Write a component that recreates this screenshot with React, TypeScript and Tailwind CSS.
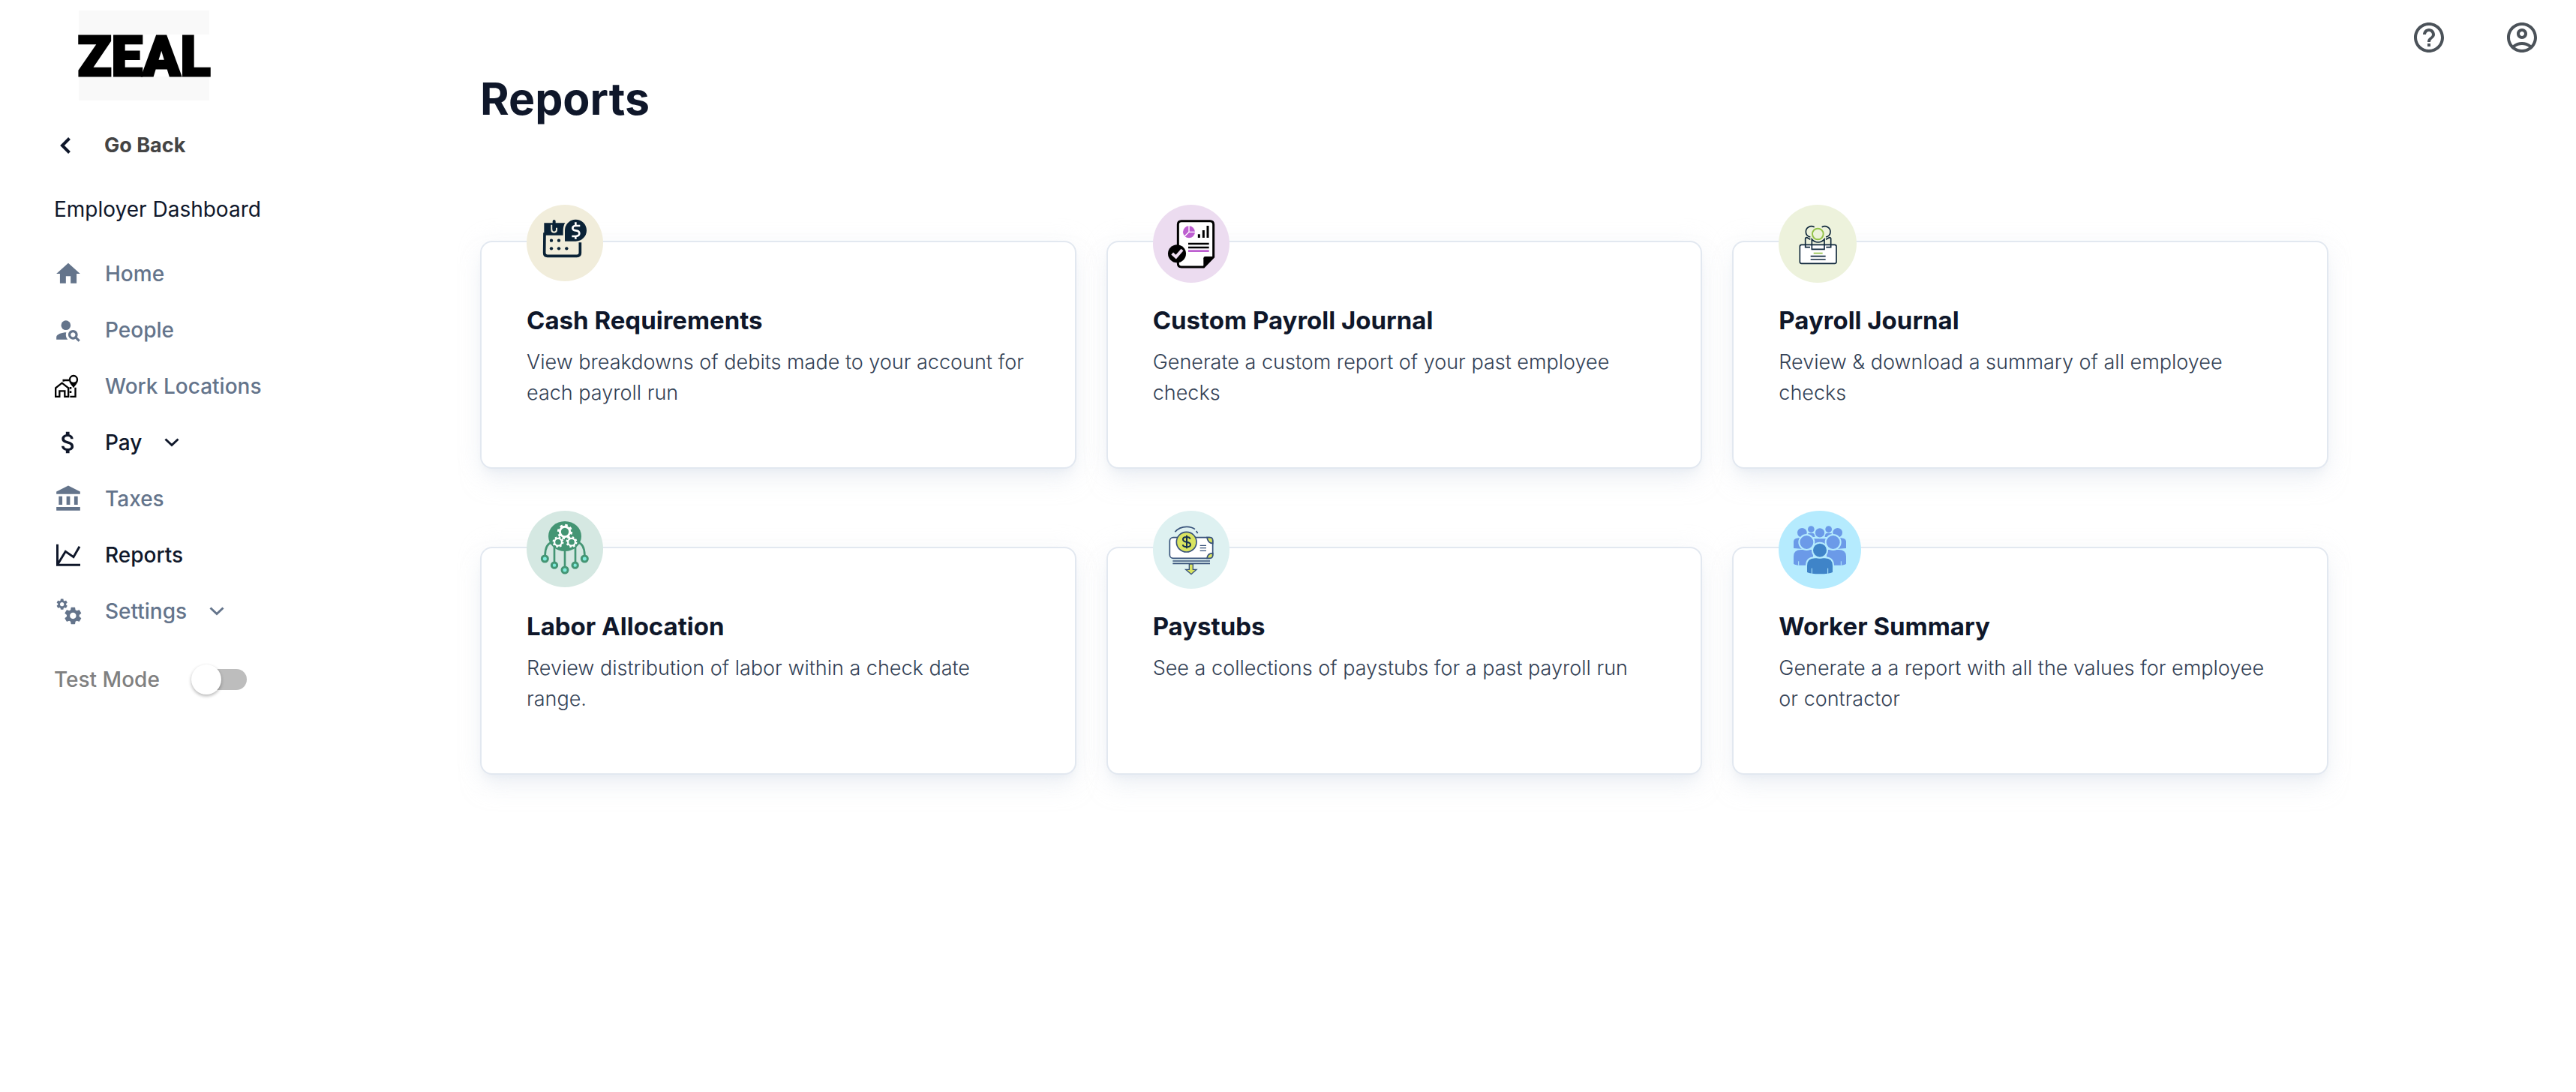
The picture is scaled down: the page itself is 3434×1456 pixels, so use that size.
import type { ReactNode } from "react";
import {
  MdAccountBalance,
  MdAttachMoney,
  MdHelpOutline,
  MdHome,
  MdOutlineAccountCircle,
  MdPersonSearch,
} from "react-icons/md";

const GEAR =
  "M19.14 12.94c.04-.3.06-.61.06-.94 0-.32-.02-.64-.07-.94l2.03-1.58c.18-.14.23-.41.12-.61l-1.92-3.32c-.12-.22-.37-.29-.59-.22l-2.39.96c-.5-.38-1.03-.7-1.62-.94l-.36-2.54c-.04-.24-.24-.41-.48-.41h-3.84c-.24 0-.43.17-.47.41l-.36 2.54c-.59.24-1.13.57-1.62.94l-2.39-.96c-.22-.08-.47 0-.59.22L2.74 8.87c-.12.21-.08.47.12.61l2.03 1.58c-.05.3-.09.63-.09.94s.02.64.07.94l-2.03 1.58c-.18.14-.23.41-.12.61l1.92 3.32c.12.22.37.29.59.22l2.39-.96c.5.38 1.03.7 1.62.94l.36 2.54c.05.24.24.41.48.41h3.84c.24 0 .44-.17.47-.41l.36-2.54c.59-.24 1.13-.56 1.62-.94l2.39.96c.22.08.47 0 .59-.22l1.92-3.32c.12-.22.07-.47-.12-.61l-2.01-1.58zM12 15.6c-1.98 0-3.6-1.62-3.6-3.6s1.62-3.6 3.6-3.6 3.6 1.62 3.6 3.6-1.62 3.6-3.6 3.6z";

function WorkIcon() {
  return (
    <svg viewBox="0 0 114 114" className="size-[38px]" aria-hidden="true">
      <g fill="none" stroke="#000" strokeWidth="7">
        <path d="M6.500 98.500V64L32 44l25.500 20v34.500H43V76H22v22.500z" />
        <path d="M40 33h21M64 98.500h21.500V62M38 29v9" />
        <circle cx="78" cy="30" r="15" />
      </g>
      <path d="M60 36c4 12 12 18 18 28 6-10 14-16 18-28l-8 8H68zM62 60h8v8h-8zM62 76h8v8h-8z" />
    </svg>
  );
}

function ChartIcon() {
  return (
    <svg viewBox="0 0 114 114" className="size-[38px]" aria-hidden="true">
      <path
        d="M13.500 14v82.500H105M15 94l31-51 32 22 24-42"
        fill="none"
        stroke="currentColor"
        strokeWidth="9"
      />
    </svg>
  );
}

function GearsIcon() {
  return (
    <svg viewBox="0 0 114 114" className="size-[38px]" fill="currentColor" aria-hidden="true">
      <g transform="translate(5 2) scale(2.250)">
        <path d={GEAR} />
      </g>
      <g transform="translate(34 33) scale(3.500)">
        <path d={GEAR} />
      </g>
    </svg>
  );
}

function Chevron() {
  return (
    <svg viewBox="0 0 20 12" className="ml-[30px] h-3 w-5" aria-hidden="true">
      <path d="M1.500 1.500 10 9.500l8.500-8" fill="none" stroke="currentColor" strokeWidth="3" />
    </svg>
  );
}

type NavItem = { label: string; icon: ReactNode; active?: boolean; menu?: boolean };

const NAV: NavItem[] = [
  { label: "Home", icon: <MdHome size={38} /> },
  { label: "People", icon: <MdPersonSearch size={38} /> },
  { label: "Work Locations", icon: <WorkIcon /> },
  { label: "Pay", icon: <MdAttachMoney size={38} />, active: true, menu: true },
  { label: "Taxes", icon: <MdAccountBalance size={38} /> },
  { label: "Reports", icon: <ChartIcon />, active: true },
  { label: "Settings", icon: <GearsIcon />, menu: true },
];

function NavRow({ label, icon, active, menu }: NavItem) {
  const tone = active
    ? "flex h-[75px] w-full items-center text-[28px] font-medium text-[#0f172a]"
    : "flex h-[75px] w-full items-center text-[28px] font-medium text-[#64748b]";
  const body = (
    <>
      <span className="mr-[30px] w-[38px]">{icon}</span>
      {label}
      {menu && <Chevron />}
    </>
  );
  return (
    <li>
      {menu ? (
        <button type="button" className={tone}>
          {body}
        </button>
      ) : (
        <a href="#" className={tone}>
          {body}
        </a>
      )}
    </li>
  );
}

function CashArt() {
  return (
    <svg viewBox="36 38 306 306" className="h-[102px] w-[102px]" aria-hidden="true">
      <g fill="#0a2236">
        <path d="M106 111h84c-6 8-8 20-8 34v15h-76z" />
        <path d="M189 184v-42a43.500 43.500 0 1 1 43.500 42z" />
        <circle cx="135" cy="181" r="6.500" />
        <circle cx="165" cy="181" r="6.500" />
        <circle cx="135" cy="213" r="6.500" />
        <circle cx="165" cy="213" r="6.500" />
        <circle cx="196" cy="213" r="6.500" />
      </g>
      <path d="M108 150l-1 81q0 12 12 12h118q13 0 13-12v-42" fill="none" stroke="#0a2236" strokeWidth="11" />
      <path d="M136 118v20q0 10 10 10t10-10v-8" fill="none" stroke="#f1eddb" strokeWidth="6" />
      <path d="M146 104v30" fill="none" stroke="#0a2236" strokeWidth="12" strokeLinecap="round" />
      <path
        d="M250 122h-19q-11 1-11 10 0 8 12 9 15 1 15 12 0 10-14 11h-16M232 108v13M232 164v11"
        fill="none"
        stroke="#fff"
        strokeWidth="8"
      />
    </svg>
  );
}

function CustomArt() {
  return (
    <svg viewBox="36 38 306 312" className="h-[104px] w-[102px]" aria-hidden="true">
      <path
        d="M150 103h114q14 0 14 14v130l-39 40h-89q-14 0-14-14V117q0-14 14-14z"
        fill="#fff"
        stroke="#000"
        strokeWidth="9"
      />
      <path d="M238 287v-35q0-7 7-7h34z" />
      <circle cx="180" cy="147" r="24" fill="#bd5fd0" />
      <path d="M180 122v25l-18 18M180 147h25" fill="none" stroke="#fff" strokeWidth="4" />
      <path d="M220 156v14M238 140v30M255 122v48" stroke="#000" strokeWidth="9" />
      <path d="M177 194h83M177 209h83" stroke="#000" strokeWidth="8" />
      <path d="M177 223h83" stroke="#bd5fd0" strokeWidth="8" />
      <circle cx="132" cy="234" r="36" />
      <path d="M113 233l15 14 25-29" fill="none" stroke="#ecdcf0" strokeWidth="12" />
    </svg>
  );
}

function JournalArt() {
  return (
    <svg viewBox="33 38 312 312" className="h-[104px] w-[104px]" aria-hidden="true">
      <rect x="118" y="198" width="146" height="75" rx="7" fill="#fff" />
      <g fill="none" stroke="#10283c" strokeWidth="5">
        <rect x="118" y="198" width="146" height="75" rx="7" />
        <path d="M176 127c-16-8-34 2-34 19 0 11 7 19 18 21M206 127c16-8 34 2 34 19 0 11-7 19-18 21" />
        <path d="M140 198v-24q0-5 6-5l14 8M242 198v-24q0-5-6-5l-14 8" />
        <path d="M140 198v10h19M242 198v10h-19" />
        <path d="M166 216v-40q10 12 25 12t25-12v40z" />
        <path d="M161 244h60M161 257h60" />
      </g>
      <circle cx="190" cy="155" r="22" fill="#edf2dc" stroke="#94c24a" strokeWidth="6" />
      <path d="M173 232h36" stroke="#94c24a" strokeWidth="5" />
    </svg>
  );
}

function Cog({ x, y, r }: { x: number; y: number; r: number }) {
  return (
    <g transform={`translate(${x} ${y}) scale(${r / 30})`} fill="none" stroke="#fff">
      <circle r="20" strokeWidth="9" />
      <circle r="26" strokeWidth="9" strokeDasharray="10.200 10.200" />
    </g>
  );
}

function LaborArt() {
  return (
    <svg viewBox="36 32 306 306" className="h-[102px] w-[102px]" aria-hidden="true">
      <ellipse cx="189" cy="134" rx="66" ry="60" fill="#449574" />
      <g fill="none" stroke="#449574" strokeWidth="8">
        <path d="M137 158q-27 8-27 52M241 158q27 8 27 52M147 172v66M231 172v66M189 185v75" />
      </g>
      <Cog x={189} y={116} r={30} />
      <Cog x={162} y={157} r={22} />
      <Cog x={216} y={157} r={22} />
      <g fill="#7fecdc" stroke="#449574" strokeWidth="9">
        <circle cx="109" cy="224" r="12" />
        <circle cx="147" cy="250" r="11" />
        <circle cx="189" cy="269" r="12" />
        <circle cx="230" cy="250" r="11" />
        <circle cx="268" cy="224" r="12" />
      </g>
    </svg>
  );
}

function PaystubArt() {
  return (
    <svg viewBox="36 32 306 312" className="h-[104px] w-[102px]" aria-hidden="true">
      <g stroke="#37527a" strokeWidth="5" fill="none">
        <rect x="103" y="139" width="172" height="83" rx="14" fill="#fff" />
        <path d="M252 139h12q11 0 11 12v12q-20-2-23-24zM252 222h12q11 0 11-12v-8q-20 0-23 20z" fill="#d9e360" />
        <path d="M124 117q17-21 47-21 20 0 33 10M209 113l6 9" />
        <path d="M115 233h149M115 243h149" />
        <path d="M224 171h25M224 181h25M224 192h25" strokeWidth="4" />
        <path d="M181 245h15v22h14l-21 19-22-19h14z" fill="#d9e360" strokeWidth="4" />
        <circle cx="170" cy="157" r="40" fill="#d9e360" />
      </g>
      <path
        d="M185 145q-2-8-15-8-14 0-14 9t14 11q16 2 16 11 0 9-15 9-14 0-16-9M171 130v53"
        fill="none"
        stroke="#14304f"
        strokeWidth="6"
      />
    </svg>
  );
}

function WorkerArt() {
  return (
    <svg viewBox="33 32 330 312" className="h-[104px] w-[110px]" aria-hidden="true">
      <g fill="#6b9ae8">
        <circle cx="163" cy="106" r="13" />
        <circle cx="233" cy="106" r="13" />
        <path d="M150 123q16-5 28 2v12h-24zM246 123q-16-5-28 2v12h24z" />
        <circle cx="127" cy="120" r="19" />
        <circle cx="269" cy="120" r="19" />
        <path d="M93 182v-28q2-12 20-13h20v44zM303 182v-28q-2-12-20-13h-20v44z" />
        <path d="M172 144h52v40h-52z" />
        <circle cx="198" cy="120" r="21" stroke="#b5ebfe" strokeWidth="5" />
        <path d="M93 244v-30q0-26 30-26h48v62h-52q-18 0-26-6zM303 244v-30q0-26-30-26h-48v62h52q18 0 26-6z" />
      </g>
      <g fill="#6b9ae8" stroke="#b5ebfe" strokeWidth="6">
        <circle cx="145" cy="158" r="30" />
        <circle cx="251" cy="158" r="30" />
      </g>
      <g fill="#3f84c8" stroke="#b5ebfe" strokeWidth="6">
        <path d="M144 280v-28q0-33 34-33h40q34 0 34 33v28q-18 8-54 8t-54-8z" />
        <circle cx="198" cy="190" r="30" />
      </g>
      <path d="M166 262v24M230 262v24M113 234v16M283 234v16" stroke="#b5ebfe" strokeWidth="3" />
    </svg>
  );
}

const REPORTS = [
  { title: "Cash Requirements", text: "View breakdowns of debits made to your account for each payroll run", art: <CashArt />, disc: "bg-[#f1eddb]" },
  { title: "Custom Payroll Journal", text: "Generate a custom report of your past employee checks", art: <CustomArt />, disc: "bg-[#ecdcf0]" },
  { title: "Payroll Journal", text: "Review & download a summary of all employee checks", art: <JournalArt />, disc: "bg-[#edf2dc]" },
  { title: "Labor Allocation", text: "Review distribution of labor within a check date range.", art: <LaborArt />, disc: "bg-[#d5e8e2]" },
  { title: "Paystubs", text: "See a collections of paystubs for a past payroll run", art: <PaystubArt />, disc: "bg-[#def1f1]" },
  { title: "Worker Summary", text: "Generate a a report with all the values for employee or contractor", art: <WorkerArt />, disc: "bg-[#b5ebfe]" },
];

export default function App() {
  return (
    <div className="flex min-h-screen bg-white font-['Inter',sans-serif] text-[#0f172a]">
      <aside className="w-[560px] shrink-0 pl-[72px] pt-[14px]">
        <div className="ml-[33px] flex h-[120px] w-[174px] items-center bg-[#f9f9f9]">
          <div className="flex h-14 w-full items-center justify-center bg-white">
            <span className="pt-1 font-['Roboto',sans-serif] text-[74px] font-black leading-[74px] text-black [-webkit-text-stroke:3px_black]">
              ZEAL
            </span>
          </div>
        </div>
        <a href="#" className="mt-[30px] flex h-[60px] items-center text-[27px] font-bold text-[#444444]">
          <svg viewBox="0 0 14 22" className="ml-2 mr-[45px] h-[22px] w-[14px]" aria-hidden="true">
            <path d="M12.500 1.500 3 11l9.500 9.500" fill="none" stroke="#0f172a" strokeWidth="4" />
          </svg>
          Go Back
        </a>
        <h2 className="mt-[35px] text-[28px] leading-[40px]">Employer Dashboard</h2>
        <nav className="mt-[28px]">
          <ul>
            {NAV.map((item) => (
              <NavRow key={item.label} {...item} />
            ))}
          </ul>
        </nav>
        <label className="mt-[34px] flex h-10 items-center text-[28px] font-medium text-[#808080]">
          Test Mode
          <input
            type="checkbox"
            role="switch"
            className="relative ml-[48px] h-7 w-[68px] appearance-none rounded-full bg-[#bdbdbd] before:absolute before:-left-1.5 before:-top-1.5 before:size-10 before:rounded-full before:bg-white before:shadow-[0_2px_4px_rgba(0,0,0,0.3)]"
          />
        </label>
      </aside>

      <div className="min-w-0 flex-1 pl-20">
        <header className="flex h-24 items-center justify-end gap-[76px] pr-[48px] pt-1 text-[#4b5259]">
          <button type="button" aria-label="Help">
            <MdHelpOutline size={48} />
          </button>
          <button type="button" aria-label="Account">
            <MdOutlineAccountCircle size={48} />
          </button>
        </header>
        <main className="pr-[330px]">
          <h1 className="text-[59px] font-bold leading-[72px]">Reports</h1>
          <div className="mt-[153px] grid grid-cols-3 gap-x-10 gap-y-[104px]">
            {REPORTS.map((r) => (
              <a
                key={r.title}
                href="#"
                className="flex min-h-[304px] flex-col rounded-2xl border-2 border-[#e2e8f0] bg-white px-[60px] shadow-[0_20px_30px_-6px_rgba(226,232,240,0.5),0_8px_12px_-8px_rgba(226,232,240,0.9),0_0_30px_rgba(226,232,240,0.25)]"
              >
                <div className="-mt-[50px] flex h-[104px] items-start">
                  <span className={`overflow-hidden rounded-[50%] ${r.disc}`}>{r.art}</span>
                </div>
                <h3 className="mt-[30px] text-[33px] font-bold leading-[40px]">{r.title}</h3>
                <p className="mt-[15px] text-[27px] font-light leading-[41px] text-[#334155]">{r.text}</p>
              </a>
            ))}
          </div>
        </main>
      </div>
    </div>
  );
}
